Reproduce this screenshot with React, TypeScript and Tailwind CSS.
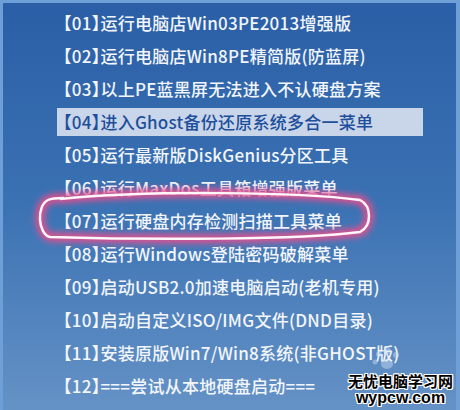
const items = [
  '【01】运行电脑店Win03PE2013增强版',
  '【02】运行电脑店Win8PE精简版(防蓝屏)',
  '【03】以上PE蓝黑屏无法进入不认硬盘方案',
  '【04】进入Ghost备份还原系统多合一菜单',
  '【05】运行最新版DiskGenius分区工具',
  '【06】运行MaxDos工具箱增强版菜单',
  '【07】运行硬盘内存检测扫描工具菜单',
  '【08】运行Windows登陆密码破解菜单',
  '【09】启动USB2.0加速电脑启动(老机专用)',
  '【10】启动自定义ISO/IMG文件(DND目录)',
  '【11】安装原版Win7/Win8系统(非GHOST版)',
  '【12】===尝试从本地硬盘启动===',
];

const outline =
  '1px 0 #fff,-1px 0 #fff,0 1px #fff,0 -1px #fff,1px 1px #fff,-1px -1px #fff,1px -1px #fff,-1px 1px #fff';

export default function App() {
  return (
    <div
      className="relative w-[460px] h-[410px] overflow-hidden bg-gradient-to-b from-[#2a5ea6] via-[#3b72b3] to-[#6592c6]"
      style={{ fontFamily: '"Noto Sans CJK SC", "Noto Sans", sans-serif' }}
    >
      <div className="absolute inset-0 border-l-[3px] border-t-[3px] border-r-[4px] border-[#6e9fd6]" />
      <div className="flex flex-col pt-[6px] pl-[57px] text-[17px] font-medium tracking-[0.25px] [font-feature-settings:'halt']">
        {items.map((t, i) => (
          <div key={i} className="h-[33px] flex items-center">
            {i === 3 ? (
              <div className="w-[366px] h-[28px] bg-[#c9d5e8] flex items-center pl-[6px] text-[#1d4f9c] whitespace-nowrap">
                {t}
              </div>
            ) : (
              <div className="pl-[6px] text-[#f2f6fb] whitespace-nowrap">{t}</div>
            )}
          </div>
        ))}
      </div>

      {/* hand-drawn highlight around item 07 */}
      <svg className="absolute left-0 top-0" width="460" height="410" viewBox="0 0 460 410">
        <defs>
          <filter id="glow" x="-20%" y="-50%" width="140%" height="200%">
            <feGaussianBlur stdDeviation="3" />
          </filter>
        </defs>
        <path
          d="M60 199 C150 190 300 192 360 200 C372 206 372 226 360 232 C300 240 150 240 50 237 C38 234 36 206 48 200 C52 198 58 198 64 198"
          fill="none"
          stroke="#e4508f"
          strokeWidth="9"
          filter="url(#glow)"
        />
        <path
          d="M60 199 C150 190 300 192 360 200 C372 206 372 226 360 232 C300 240 150 240 50 237 C38 234 36 206 48 200 C52 198 58 198 64 198"
          fill="none"
          stroke="#fff6fa"
          strokeWidth="2.5"
        />
        {/* faint paw mark behind the watermark */}
        <g fill="#cfe0f4" opacity="0.45">
          <circle cx="379" cy="354" r="3" />
          <circle cx="388" cy="351" r="3" />
          <circle cx="396" cy="355" r="3" />
          <circle cx="375" cy="362" r="2.5" />
          <ellipse cx="387" cy="364" rx="6" ry="5" />
        </g>
      </svg>

      {/* watermark */}
      <div className="absolute left-[348px] top-[373px] flex flex-col items-center">
        <div className="text-[15px] leading-[16px] font-bold text-black" style={{ textShadow: outline }}>
          无忧电脑学习网
        </div>
        <div
          className="text-[16px] leading-[17px] font-bold text-black"
          style={{ fontFamily: '"Liberation Sans", sans-serif', textShadow: outline }}
        >
          wypcw.com
        </div>
      </div>
    </div>
  );
}
